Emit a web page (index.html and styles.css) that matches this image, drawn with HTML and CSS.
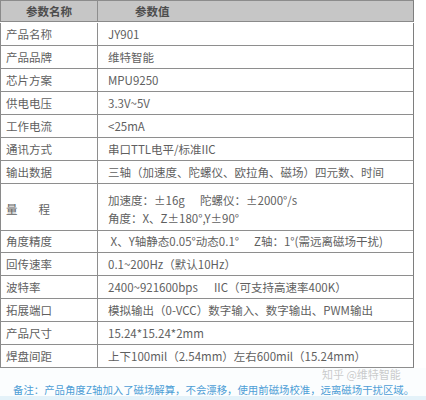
FILE: index.html
```html
<!DOCTYPE html>
<html lang="zh-CN">
<head>
<meta charset="utf-8">
<title>JY901 参数</title>
<link rel="stylesheet" href="styles.css">
</head>
<body>
<div class="page">
  <div class="spec">
    <div class="cell head name">参数名称</div>
    <div class="cell head value">参数值</div>

    <div class="cell name">产品名称</div>
    <div class="cell value">JY901</div>

    <div class="cell name">产品品牌</div>
    <div class="cell value">维特智能</div>

    <div class="cell name">芯片方案</div>
    <div class="cell value">MPU9250</div>

    <div class="cell name">供电电压</div>
    <div class="cell value">3.3V~5V</div>

    <div class="cell name">工作电流</div>
    <div class="cell value">&lt;25mA</div>

    <div class="cell name">通讯方式</div>
    <div class="cell value">串口TTL电平/标准IIC</div>

    <div class="cell name">输出数据</div>
    <div class="cell value">三轴（加速度、陀螺仪、欧拉角、磁场）四元数、时间</div>

    <div class="cell name tall"><span class="spread">量程</span></div>
    <div class="cell value tall">
      <div class="line"><span class="col-a">加速度：±16g</span><span>陀螺仪：±2000°/s</span></div>
      <div class="line">角度：X、Z±180°,Y±90°</div>
    </div>

    <div class="cell name">角度精度</div>
    <div class="cell value"><span class="col-b">&nbsp;X、Y轴静态0.05°动态0.1°</span><span>Z轴：1°(需远离磁场干扰)</span></div>

    <div class="cell name">回传速率</div>
    <div class="cell value">0.1~200Hz（默认10Hz）</div>

    <div class="cell name">波特率</div>
    <div class="cell value"><span class="col-c">2400~921600bps</span><span>IIC（可支持高速率400K）</span></div>

    <div class="cell name">拓展端口</div>
    <div class="cell value">模拟输出（0-VCC）数字输入、数字输出、PWM输出</div>

    <div class="cell name">产品尺寸</div>
    <div class="cell value">15.24*15.24*2mm</div>

    <div class="cell name">焊盘间距</div>
    <div class="cell value">上下100mil（2.54mm）左右600mil（15.24mm）</div>
  </div>
  <div class="note">备注：产品角度Z轴加入了磁场解算，不会漂移，使用前磁场校准，远离磁场干扰区域。</div>
  <div class="watermark">知乎 @维特智能</div>
</div>
</body>
</html>
```

FILE: styles.css
```css
html, body {
  margin: 0;
  padding: 0;
  background: #ffffff;
}

body {
  font-family: "Noto Sans CJK SC", "Noto Sans", sans-serif;
  width: 426px;
  height: 400px;
  overflow: hidden;
}

.page {
  position: relative;
  width: 426px;
  height: 400px;
}

.spec {
  display: grid;
  grid-template-columns: 98px 316px;
  grid-auto-rows: 23px;
  width: 414px;
}

.cell {
  box-sizing: border-box;
  border-bottom: 1px solid #8e8e8e;
  display: flex;
  align-items: center;
  font-size: 11.5px;
  color: #5f5f5f;
  white-space: nowrap;
  overflow: hidden;
}

.cell.name {
  border-left: 1px solid #8a8a8a;
  border-right: 1px solid #8e8e8e;
  padding-left: 5px;
}

.cell.value {
  border-right: 1px solid #7e7e7e;
  padding-left: 10px;
}

.cell.head {
  height: 22px;
  background: #c6c6c6;
  border-top: 1px solid #8c8c8c;
  border-bottom: 1px solid #8a8a8a;
  font-weight: bold;
  color: #4d4d4d;
  font-size: 11.5px;
}

.cell.head.name {
  justify-content: center;
  padding-left: 0;
}

.cell.head.value {
  padding-left: 37px;
}

.spec > .cell.head {
  grid-row: 1;
}

.cell.tall {
  grid-row: span 2;
  height: 47px;
  padding-top: 3px;
}

.cell.value.tall {
  flex-direction: column;
  align-items: flex-start;
  justify-content: center;
}

.line {
  line-height: 18px;
}

.spread {
  letter-spacing: 21px;
}

.col-a {
  display: inline-block;
  width: 92px;
}

.col-b {
  display: inline-block;
  width: 146px;
}

.col-c {
  display: inline-block;
  width: 106px;
}

.note {
  box-sizing: border-box;
  height: 32px;
  padding: 14px 0 0 13px;
  font-size: 10.4px;
  color: #4d9ed6;
  white-space: nowrap;
  border-bottom: 4px solid #e4f2f9;
  background: #fbfdfe;
}

.watermark {
  position: absolute;
  left: 322px;
  top: 366px;
  font-size: 11px;
  color: rgba(150, 150, 150, 0.5);
  white-space: nowrap;
}
```
